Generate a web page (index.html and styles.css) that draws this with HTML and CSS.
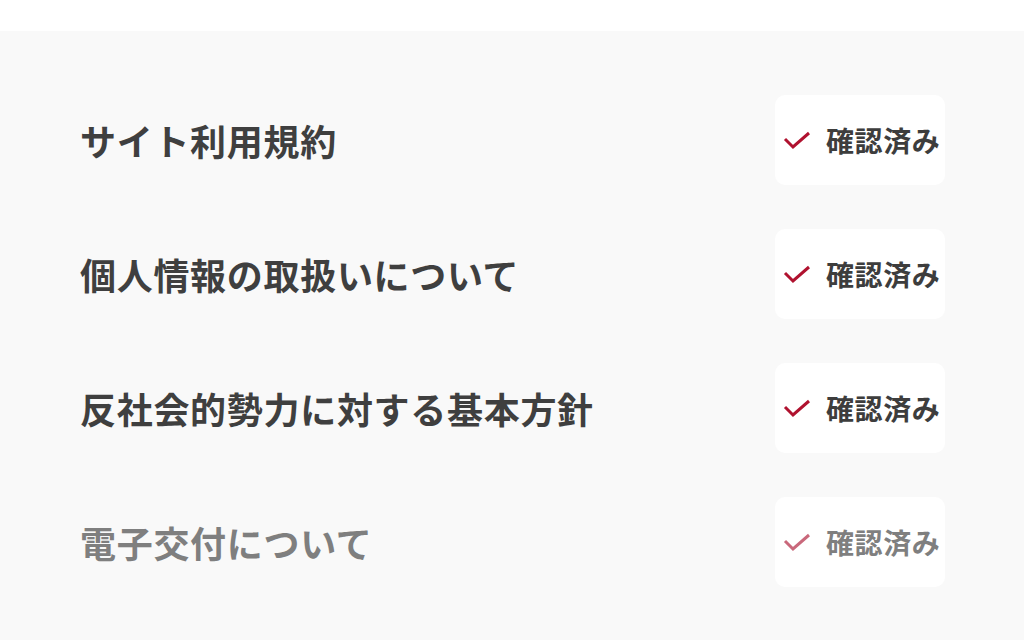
FILE: index.html
```html
<!DOCTYPE html>
<html lang="ja">
<head>
<meta charset="utf-8">
<link rel="stylesheet" href="styles.css">
</head>
<body>
<div class="topbar"></div>
<main class="list">
  <div class="row">
    <div class="title">サイト利用規約</div>
    <div class="badge">
      <svg class="check" viewBox="0 0 28 20" width="28" height="20"><path d="M2 9 L10 17 L26 3" fill="none" stroke="currentColor" stroke-width="3"/></svg>
      <span class="label">確認済み</span>
    </div>
  </div>
  <div class="row">
    <div class="title">個人情報の取扱いについて</div>
    <div class="badge">
      <svg class="check" viewBox="0 0 28 20" width="28" height="20"><path d="M2 9 L10 17 L26 3" fill="none" stroke="currentColor" stroke-width="3"/></svg>
      <span class="label">確認済み</span>
    </div>
  </div>
  <div class="row">
    <div class="title">反社会的勢力に対する基本方針</div>
    <div class="badge">
      <svg class="check" viewBox="0 0 28 20" width="28" height="20"><path d="M2 9 L10 17 L26 3" fill="none" stroke="currentColor" stroke-width="3"/></svg>
      <span class="label">確認済み</span>
    </div>
  </div>
  <div class="row row-dim">
    <div class="title">電子交付について</div>
    <div class="badge">
      <svg class="check" viewBox="0 0 28 20" width="28" height="20"><path d="M2 9 L10 17 L26 3" fill="none" stroke="currentColor" stroke-width="3"/></svg>
      <span class="label">確認済み</span>
    </div>
  </div>
</main>
</body>
</html>
```

FILE: styles.css
```css
html, body {
  margin: 0;
  padding: 0;
  width: 1024px;
  height: 640px;
  overflow: hidden;
  background: #f9f9f9;
  font-family: "Noto Sans CJK JP", "Noto Sans", sans-serif;
}
.topbar {
  height: 31px;
  background: #ffffff;
}
.list {
  display: flex;
  flex-direction: column;
  gap: 44px;
  padding: 64px 79px 0 80px;
}
.row {
  display: flex;
  align-items: center;
  justify-content: space-between;
  height: 90px;
}
.title {
  font-size: 36px;
  font-weight: 700;
  letter-spacing: 0.7px;
  color: #3f3f3f;
  line-height: 1;
}
.badge {
  box-sizing: border-box;
  width: 170px;
  height: 90px;
  background: #ffffff;
  border-radius: 10px;
  display: flex;
  align-items: center;
  padding-left: 8px;
  gap: 15px;
}
.check {
  color: #b0122f;
  display: block;
}
.label {
  font-size: 28px;
  font-weight: 700;
  letter-spacing: 0.6px;
  color: #3d3d3d;
  line-height: 1;
}
.row-dim .title,
.row-dim .label {
  color: #7f7f7f;
}
.row-dim .check {
  color: #c9687b;
}
```
